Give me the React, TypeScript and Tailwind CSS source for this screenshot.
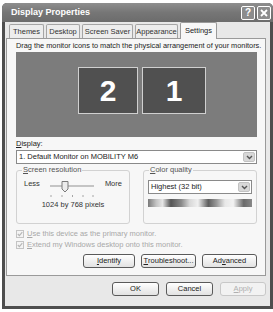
import React from "react";

const Tab: React.FC<{ label: string; w: string; active?: boolean }> = ({ label, w, active }) =>
  active ? (
    <div className={`${w} relative z-10 -mb-px h-[17px] flex items-center justify-center bg-[#f7f7f7] border border-b-0 border-[#9a9a9a] rounded-t-[2px] text-[7.5px] text-[#222]`}>
      {label}
    </div>
  ) : (
    <div className={`${w} h-[14px] flex items-center justify-center bg-[#ededed] border border-b-0 border-[#a5a5a5] rounded-t-[2px] text-[7.5px] text-[#333]`}>
      {label}
    </div>
  );

const Btn: React.FC<{ children: React.ReactNode; w: string; disabled?: boolean }> = ({
  children,
  w,
  disabled,
}) => (
  <div
    className={`${w} h-[14px] flex items-center justify-center rounded-[3px] border text-[7.5px] ${
      disabled
        ? "border-[#c8c8c8] text-[#b0b0b0] bg-[#f2f2f2]"
        : "border-[#5a5a5a] text-[#222] bg-gradient-to-b from-[#ffffff] to-[#e2e2e2]"
    }`}
  >
    {children}
  </div>
);

const Arrow: React.FC<{ h: string }> = ({ h }) => (
  <div className={`w-[12px] ${h} m-px rounded-[2px] bg-[#d8d8d8] border border-[#c2c2c2] flex items-center justify-center`}>
    <svg width="7" height="5" viewBox="0 0 7 5">
      <path d="M1 1 L3.5 3.5 L6 1" stroke="#555" strokeWidth="1.4" fill="none" />
    </svg>
  </div>
);

const Check: React.FC<{ children: React.ReactNode }> = ({ children }) => (
  <div className="h-[9px] flex items-center gap-[3px] text-[7.5px] text-[#a8a8a8]">
    <div className="w-[8px] h-[8px] border border-[#c4c4c4] bg-[#f4f4f4] flex items-center justify-center">
      <svg width="6" height="6" viewBox="0 0 6 6">
        <path d="M0.8 3 L2.4 4.6 L5.3 1.2" stroke="#b5b5b5" strokeWidth="1.1" fill="none" />
      </svg>
    </div>
    <span>{children}</span>
  </div>
);

export default function App() {
  return (
    <div className="w-[273px] h-[312px] bg-white overflow-hidden font-['Liberation_Sans',sans-serif] pt-[3px] pl-[2px]">
      <div className="w-[271px] h-[306px] bg-[#4e4e4e] flex flex-col px-[3px] pb-[3px] rounded-t-[5px]">
        {/* title bar */}
        <div className="h-[19px] -mx-[3px] pl-[9px] pr-[2px] flex items-center justify-between bg-gradient-to-b from-[#8e8e8e] via-[#767676] to-[#6c6c6c] rounded-t-[5px]">
          <span className="text-white font-bold text-[9px]">Display Properties</span>
          <div className="flex gap-[2px]">
            <div className="w-[14px] h-[14px] rounded-[2px] border border-white bg-[#8c8c8c] flex items-center justify-center text-white font-bold text-[10px] leading-none">
              ?
            </div>
            <div className="w-[14px] h-[14px] rounded-[2px] border border-white bg-[#8c8c8c] flex items-center justify-center">
              <svg width="8" height="8" viewBox="0 0 8 8">
                <path d="M1 1 L7 7 M7 1 L1 7" stroke="white" strokeWidth="1.8" />
              </svg>
            </div>
          </div>
        </div>

        {/* client */}
        <div className="flex-1 bg-[#e8e8e8] pl-[1px] pr-[4px] flex flex-col">
          <div className="flex items-end gap-[2px] pl-[3px] h-[16px]">
            <Tab label="Themes" w="w-[35px]" />
            <Tab label="Desktop" w="w-[34px]" />
            <Tab label="Screen Saver" w="w-[51px]" />
            <Tab label="Appearance" w="w-[43px]" />
            <Tab label="Settings" w="w-[37px]" active />
          </div>

          <div className="h-[238px] bg-[#f7f7f7] border border-[#9a9a9a] pl-[9px] pr-[8px] pt-[2px] flex flex-col">
            <div className="text-[7.35px] text-[#222] leading-[9px] whitespace-nowrap">
              Drag the monitor icons to match the physical arrangement of your monitors.
            </div>

            <div className="mt-[2px] h-[85px] bg-[#7c7c7c] flex items-start gap-[4px] pt-[15px] pl-[62px]">
              <div className="w-[60px] h-[47px] bg-[#505050] border border-[#d0d0d0] flex items-center justify-center text-white font-bold text-[30px] leading-none">
                2
              </div>
              <div className="w-[64px] h-[47px] bg-[#505050] border border-[#d0d0d0] flex items-center justify-center text-white font-bold text-[30px] leading-none">
                1
              </div>
            </div>

            <div className="mt-[2px] text-[7.5px] text-[#222] leading-[9px]">
              <span className="underline">D</span>isplay:
            </div>
            <div className="mt-[2px] h-[14px] bg-white border border-[#8a8a8a] flex items-center justify-between pl-[2px]">
              <span className="text-[7.5px] text-[#222]">1. Default Monitor on MOBILITY M6</span>
              <Arrow h="h-[10px]" />
            </div>

            <div className="mt-[6px] flex gap-[13px]">
              {/* screen resolution group */}
              <div className="relative w-[115px] h-[54px] border border-[#d2d2d2] rounded-[3px]">
                <span className="absolute -top-[6px] left-[5px] px-[1px] bg-[#f7f7f7] text-[7.5px] text-[#555] leading-[10px]">
                  <span className="underline">S</span>creen resolution
                </span>
                <div className="flex items-start justify-between px-[7px] pt-[7px] text-[7.5px] text-[#333]">
                  <span>Less</span>
                  <span>More</span>
                </div>
                <div className="absolute left-[33px] top-[9px]">
                  <svg width="48" height="18" viewBox="0 0 48 18">
                    <rect x="0" y="5" width="44" height="2" fill="#c4c4c4" />
                    <path d="M12 1.5 H18 V9 L15 12 L12 9 Z" fill="#ececec" stroke="#7a7a7a" strokeWidth="1" />
                    <path d="M1 15 V17 M12 15 V17 M22.5 15 V17 M33 15 V17 M43 15 V17" stroke="#a5a5a5" strokeWidth="1" />
                  </svg>
                </div>
                <div className="absolute left-0 right-0 top-[28px] text-center text-[7.5px] text-[#333]">
                  1024 by 768 pixels
                </div>
              </div>

              {/* color quality group */}
              <div className="relative w-[115px] h-[54px] border border-[#d2d2d2] rounded-[3px] px-[4px] pt-[9px]">
                <span className="absolute -top-[6px] left-[5px] px-[1px] bg-[#f7f7f7] text-[7.5px] text-[#555] leading-[10px]">
                  <span className="underline">C</span>olor quality
                </span>
                <div className="h-[14px] bg-white border border-[#8a8a8a] flex items-center justify-between pl-[2px]">
                  <span className="text-[7.5px] text-[#222]">Highest (32 bit)</span>
                  <Arrow h="h-[10px]" />
                </div>
                <div className="mt-[5px] h-[8px] bg-[linear-gradient(to_right,#7a7a7a_0%,#c4c4c4_8%,#e6e6e6_14%,#555_22%,#8a8a8a_32%,#d8d8d8_40%,#f0f0f0_48%,#5e5e5e_58%,#9a9a9a_66%,#e8e8e8_74%,#f2f2f2_82%,#6a6a6a_92%,#888_100%)]" />
              </div>
            </div>

            <div className="mt-[5px] flex flex-col gap-[2px]">
              <Check>
                <span className="underline">U</span>se this device as the primary monitor.
              </Check>
              <Check>
                <span className="underline">E</span>xtend my Windows desktop onto this monitor.
              </Check>
            </div>

            <div className="mt-[5px] flex justify-end gap-[6px]">
              <Btn w="w-[52px]">
                <span className="underline">I</span>dentify
              </Btn>
              <Btn w="w-[55px]">
                <span className="underline">T</span>roubleshoot...
              </Btn>
              <Btn w="w-[55px]">
                Ad<span className="underline">v</span>anced
              </Btn>
            </div>
          </div>

          <div className="mt-[6px] flex justify-end gap-[7px]">
            <Btn w="w-[47px]">OK</Btn>
            <Btn w="w-[47px]">Cancel</Btn>
            <Btn w="w-[46px]" disabled>
              <span className="underline">A</span>pply
            </Btn>
          </div>
        </div>
      </div>
    </div>
  );
}
